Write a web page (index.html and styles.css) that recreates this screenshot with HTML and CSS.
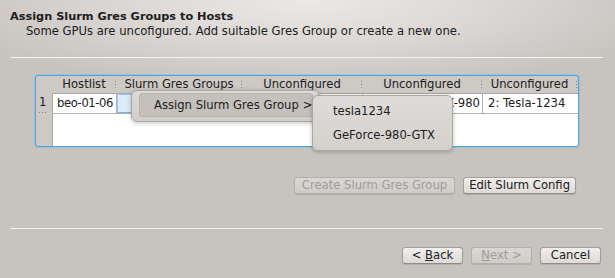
FILE: index.html
```html
<!DOCTYPE html>
<html>
<head>
<meta charset="utf-8">
<link rel="stylesheet" href="styles.css">
</head>
<body>
<div class="page">
  <header class="head">
    <div class="title">Assign Slurm Gres Groups to Hosts</div>
    <div class="subtitle">Some GPUs are uncofigured. Add suitable Gres Group or create a new one.</div>
  </header>
  <div class="sep sep-top"></div>

  <div class="table-frame">
    <div class="corner"></div>
    <div class="hheader">
      <div class="hcol c1">Hostlist</div>
      <div class="hcol c2">Slurm Gres Groups</div>
      <div class="hcol c3">Unconfigured</div>
      <div class="hcol c4">Unconfigured</div>
      <div class="hcol c5">Unconfigured</div>
    </div>
    <div class="vheader">
      <div class="vrow"><span class="rownum">1</span><span class="rowgrip"></span></div>
    </div>
    <div class="viewport">
      <div class="row">
        <div class="cell c1">beo-01-06</div>
        <div class="cell c2 editing"></div>
        <div class="cell c3"></div>
        <div class="cell c4 right">1: GeForce-GTX-980</div>
        <div class="cell c5">2: Tesla-1234</div>
      </div>
    </div>
  </div>

  <div class="actions">
    <button class="btn disabled wide">Create Slurm Gres Group</button>
    <button class="btn narrow">Edit Slurm Config</button>
  </div>

  <div class="sep sep-bottom"></div>

  <div class="nav">
    <button class="btn navbtn">&lt; <u>B</u>ack</button>
    <button class="btn navbtn disabled"><u>N</u>ext &gt;</button>
    <button class="btn navbtn">Cancel</button>
  </div>

  <div class="menu">
    <div class="menu-item active">
      <span>Assign Slurm Gres Group</span>
      <span class="chev">&gt;</span>
    </div>
  </div>
  <div class="submenu">
    <div class="sub-item">tesla1234</div>
    <div class="sub-item">GeForce-980-GTX</div>
  </div>
</div>
</body>
</html>
```

FILE: styles.css
```css
html, body {
  margin: 0;
  padding: 0;
}
body {
  width: 615px;
  height: 278px;
  overflow: hidden;
  background-color: #c7c3bf;
  background-image: radial-gradient(ellipse 380px 90px at 50% 0, #ebe9e7 0%, #dcd9d6 45%, rgba(199,195,191,0) 100%);
  font-family: "DejaVu Sans", sans-serif;
  font-size: 11.6px;
  color: #202020;
}
.page {
  position: relative;
  width: 615px;
  height: 278px;
}
.head {
  padding-top: 9px;
}
.title {
  font-weight: bold;
  font-size: 11.3px;
  line-height: 15px;
  padding-left: 10px;
}
.subtitle {
  line-height: 15px;
  padding-left: 26px;
}
.sep {
  height: 0;
  border-top: 1px solid #f4f3f1;
  margin-left: 10px;
  margin-right: 12px;
}
.sep-top {
  margin-top: 18px;
}

/* table */
.table-frame {
  margin-top: 17px;
  margin-left: 35px;
  width: 542px;
  height: 70px;
  border: 1px solid #4aa6e0;
  border-radius: 3px;
  box-shadow: 0 0 0 1px rgba(100, 180, 235, 0.35);
  display: grid;
  grid-template-columns: 16px 1fr;
  grid-template-rows: 17px 1fr;
  overflow: hidden;
  background: #cdc9c5;
}
.hheader {
  display: flex;
  line-height: 17px;
}
.hcol {
  position: relative;
  text-align: center;
  flex: none;
  white-space: nowrap;
}
.hcol::after {
  content: "";
  position: absolute;
  right: 0;
  top: 5px;
  width: 1px;
  height: 9px;
  background: repeating-linear-gradient(to bottom, #8e8a86 0 1px, transparent 1px 3px);
}
.c1 { width: 64px; }
.c2 { width: 126px; }
.c3 { width: 120px; }
.c4 { width: 120px; }
.c5 { width: 95px; }

.vheader {
  grid-column: 1;
  grid-row: 2;
}
.vrow {
  position: relative;
  height: 20px;
}
.rownum {
  position: absolute;
  left: 3px;
  top: 2px;
  line-height: 15px;
}
.rowgrip {
  position: absolute;
  left: 3px;
  bottom: 0;
  width: 8px;
  height: 1px;
  background: repeating-linear-gradient(to right, #8e8a86 0 1px, transparent 1px 3px);
}
.viewport {
  grid-column: 2;
  grid-row: 2;
  background: #ffffff;
  border-left: 1px solid #aaa6a2;
  border-top: 1px solid #aaa6a2;
  overflow: hidden;
}
.row {
  display: flex;
  height: 19px;
  border-bottom: 1px solid #b4b0ac;
}
.cell {
  flex: none;
  box-sizing: border-box;
  border-right: 1px solid #b4b0ac;
  padding-left: 4px;
  line-height: 19px;
  white-space: nowrap;
  overflow: hidden;
}
.cell.c1 { letter-spacing: -0.4px; }
.cell.right {
  text-align: right;
  padding-left: 0;
  padding-right: 2px;
}
.cell.c5 { border-right: none; padding-left: 5px; }
.cell.editing {
  background: #d9ecfb;
  border: 1px solid #9cc6ea;
  border-bottom-color: #7fb3de;
}

/* buttons */
.actions {
  margin-top: 30px;
  display: flex;
  justify-content: flex-end;
  gap: 8px;
  padding-right: 39px;
}
.btn {
  font-family: "DejaVu Sans", sans-serif;
  font-size: 11.6px;
  color: #202020;
  height: 17px;
  line-height: 15px;
  padding: 0 7px;
  margin: 0;
  border: 1px solid #a29e9a;
  border-bottom-color: #8f8b87;
  border-radius: 3px;
  background: linear-gradient(to bottom, #f0efed, #dddad7);
  box-shadow: 0 1px 1px rgba(0, 0, 0, 0.12);
}
.btn.wide { padding: 0 7px; }
.btn.narrow { padding: 0 5px; }
.btn.disabled {
  color: #a19d99;
  background: linear-gradient(to bottom, #dad7d4, #cfccc8);
  border-color: #b3afab;
}
.btn u {
  text-decoration: underline;
}
.sep-bottom {
  margin-top: 34px;
}
.nav {
  margin-top: 18px;
  display: flex;
  justify-content: flex-end;
  gap: 8px;
  padding-right: 14px;
}
.navbtn {
  min-width: 61px;
}

/* menus */
.menu {
  position: absolute;
  left: 131px;
  top: 90px;
  width: 189px;
  height: 32px;
  box-sizing: border-box;
  padding: 2px 6px 5px 7px;
  background: linear-gradient(to bottom, #dcd9d6, #d2cfcb);
  border: 1px solid #aaa6a2;
  border-radius: 6px;
  box-shadow: 0 1px 4px rgba(0, 0, 0, 0.25);
}
.menu-item {
  display: flex;
  align-items: center;
  height: 24px;
  box-sizing: border-box;
  padding-left: 14px;
  background: #c4c0bc;
  border: 1px solid #b7b3af;
  border-radius: 3px;
  white-space: nowrap;
}
.chev {
  margin-left: 4px;
}
.submenu {
  position: absolute;
  left: 312px;
  top: 95px;
  width: 141px;
  height: 56px;
  box-sizing: border-box;
  padding-top: 3px;
  background: linear-gradient(to bottom, #dedbd8, #d4d1cd);
  border: 1px solid #aaa6a2;
  border-radius: 6px;
  box-shadow: 0 1px 4px rgba(0, 0, 0, 0.25);
}
.sub-item {
  height: 24px;
  line-height: 24px;
  padding-left: 20px;
  white-space: nowrap;
}
```
